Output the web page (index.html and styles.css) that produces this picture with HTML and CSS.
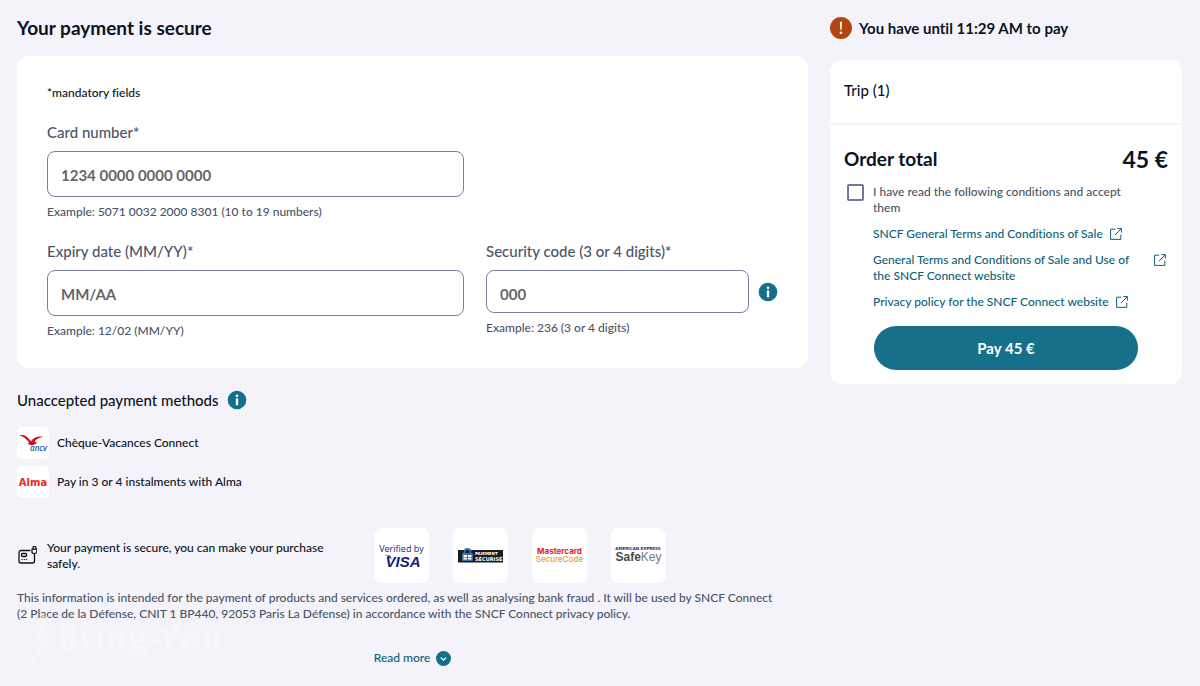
FILE: index.html
```html
<!DOCTYPE html>
<html lang="en">
<head>
<meta charset="utf-8">
<meta name="viewport" content="width=device-width, initial-scale=1">
<title>Your payment is secure</title>
<link rel="stylesheet" href="styles.css">
</head>
<body>
<svg class="defs" aria-hidden="true">
  <symbol id="info" viewBox="0 0 20 20">
    <circle cx="10" cy="10" r="9.300" fill="#12708a"/>
    <circle cx="10" cy="5.800" r="1.300" fill="#fff"/>
    <path d="M8.800 8.300h2.400v7H8.800z" fill="#fff"/>
  </symbol>
  <symbol id="external" viewBox="0 0 12 12">
    <path d="M5.2 1.2H.6v10.2h10.2V6.6M7.4.6h4v4M11.2.8L5 7" fill="none" stroke="currentColor" stroke-width="1"/>
  </symbol>
</svg>
<div class="page">
  <main class="main">
    <h1 class="title">Your payment is secure</h1>
    <form class="card form">
      <p class="mandatory">*mandatory fields</p>
      <div class="fields">
        <div class="field">
          <label class="label" for="card">Card number*</label>
          <input class="input" id="card" type="text" placeholder="1234 0000 0000 0000">
          <p class="hint">Example: 5071 0032 2000 8301 (10 to 19 numbers)</p>
        </div>
        <div class="field field-start">
          <label class="label" for="expiry">Expiry date (MM/YY)*</label>
          <input class="input" id="expiry" type="text" placeholder="MM/AA">
          <p class="hint">Example: 12/02 (MM/YY)</p>
        </div>
        <div class="field">
          <label class="label" for="code">Security code (3 or 4 digits)*</label>
          <div class="with-info">
            <input class="input input-short" id="code" type="text" placeholder="000">
            <button class="icon-button" type="button" aria-label="About the security code"><svg class="info"><use href="#info"/></svg></button>
          </div>
          <p class="hint">Example: 236 (3 or 4 digits)</p>
        </div>
      </div>
    </form>

    <section class="methods">
      <div class="methods-head">
        <h2 class="subtitle">Unaccepted payment methods</h2>
        <button class="icon-button" type="button" aria-label="About payment methods"><svg class="info"><use href="#info"/></svg></button>
      </div>
      <ul class="method-list">
        <li class="method">
          <svg class="tile" viewBox="0 0 32 32" aria-hidden="true">
            <path d="M2 8.500C6 7 10 8.500 14 14.200C16.500 11 20 9 26 9.800C21.500 10.800 18.800 12.500 17.700 14.600L20 16L17 17.800C14 19 12 17.500 10.500 16.500L12.400 15.800C9 11.500 6 9 2 8.500Z" fill="#d0101c"/>
            <text class="logo-ancv" x="13" y="24">ancv</text>
          </svg>
          Chèque-Vacances Connect
        </li>
        <li class="method">
          <svg class="tile" viewBox="0 0 32 32" aria-hidden="true">
            <text class="logo-alma" x="16" y="20">Alma</text>
          </svg>
          Pay in 3 or 4 instalments with Alma
        </li>
      </ul>
    </section>

    <section class="safety">
      <div class="safety-note">
        <svg class="safe-icon" viewBox="0 0 20 20" fill="none" stroke="#111" stroke-width="1.300" aria-hidden="true">
          <path d="M13.500 4.500H4a2 2 0 0 0-2 2v8.500a2 2 0 0 0 2 2h11.500a2 2 0 0 0 2-2V8"/>
          <rect x="4.500" y="7.500" width="5" height="3" rx="1"/>
          <path d="M4.500 13.500h1.200M6.700 13.500h1.200M8.900 13.500h1.200" stroke-width="1"/>
          <path d="M15 3.200h4.800v3.500q-2.400 1.600-4.800 0zM16 3V1.600a1.400 1.400 0 0 1 2.800 0V3" stroke-width="1.200"/>
        </svg>
        <p class="safety-text">Your payment is secure, you can make your purchase safely.</p>
      </div>
      <div class="badges">
        <svg class="badge" viewBox="0 0 55 55" role="img" aria-label="Verified by Visa">
          <text class="logo-verified" x="27.500" y="24">Verified by</text>
          <text class="logo-visa" x="29" y="39">VISA</text>
          <path d="M11 27.500h5l2 4q-3-3-7-4z" fill="#171d78"/>
        </svg>
        <svg class="badge" viewBox="0 0 55 55" role="img" aria-label="Paiement sécurisé">
          <rect x="5" y="22" width="45" height="12.500" fill="#1a1c1e"/>
          <path d="M11.500 26v-2a3 3 0 0 1 6 0v2" fill="none" stroke="#3573a3" stroke-width="1.800"/>
          <rect x="9" y="25" width="11" height="8" rx="1" fill="#3573a3"/>
          <path d="M10.500 27h3.500v2h-3.500zM15 27h3.500v2H15zM10.500 29.800h3.500v1.700h-3.500zM15 29.800h3.500v1.700H15z" fill="#fff"/>
          <text class="logo-paiement" x="22" y="27">PAIEMENT</text>
          <text class="logo-securise" x="22" y="32.500">SÉCURISÉ</text>
        </svg>
        <svg class="badge" viewBox="0 0 55 55" role="img" aria-label="Mastercard SecureCode">
          <text class="logo-mastercard" x="27.500" y="25.500">Mastercard</text>
          <text class="logo-securecode" x="27.500" y="34">SecureCode</text>
        </svg>
        <svg class="badge" viewBox="0 0 55 55" role="img" aria-label="American Express SafeKey">
          <text class="logo-amex" x="27" y="22">AMERICAN EXPRESS</text>
          <text class="logo-safekey" x="27.500" y="32.500"><tspan class="safe">Safe</tspan>Key</text>
        </svg>
      </div>
    </section>

    <p class="legal">This information is intended for the payment of products and services ordered, as well as analysing bank fraud . It will be used by SNCF Connect (2&nbsp;Place de la Défense, CNIT 1 BP440, 92053 Paris La Défense) in accordance with the SNCF Connect privacy policy.</p>
    <button class="read-more" type="button">Read more
      <svg class="chevron" viewBox="0 0 15 15" aria-hidden="true"><circle cx="7.500" cy="7.500" r="7.500" fill="#12708a"/><path d="M4.800 6.500l2.700 2.600 2.700-2.600" fill="none" stroke="#fff" stroke-width="1.200"/></svg>
    </button>
    <div class="watermark">
      <svg class="runner" viewBox="0 0 30 56" aria-hidden="true"><path d="M0 5L9 11L13 10Q12 4 16 3Q20 4 18 9L23 3L20 12L18 18L20 26L20 36Q18 41 12 43L7 52L4 54L8 42L13 36L11 28L13 19L11 14Q4 11 0 5Z" fill="#fff"/></svg>
      <span class="brand">Bring-You</span>
    </div>
  </main>

  <aside class="aside">
    <p class="deadline">
      <svg class="alert" viewBox="0 0 22 22" aria-hidden="true"><circle cx="11" cy="11" r="11" fill="#b34513"/><path d="M9.900 4.800h2.200l-.4 8h-1.400z" fill="#fff"/><circle cx="11" cy="15.800" r="1.300" fill="#fff"/></svg>
      You have until 11:29 AM to pay
    </p>
    <div class="card">
      <p class="trip">Trip (1)</p>
      <div class="order">
        <div class="total">
          <h2 class="total-label">Order total</h2>
          <span class="amount">45 €</span>
        </div>
        <div class="conditions">
          <input class="check" id="accept" type="checkbox">
          <label class="accept" for="accept">I have read the following conditions and accept them</label>
        </div>
        <ul class="links">
          <li><a class="link" href="#sale"><span>SNCF General Terms and Conditions of Sale</span><svg class="external"><use href="#external"/></svg></a></li>
          <li><a class="link link-wide" href="#use"><span>General Terms and Conditions of Sale and Use of the SNCF Connect website</span><svg class="external"><use href="#external"/></svg></a></li>
          <li><a class="link" href="#privacy"><span>Privacy policy for the SNCF Connect website</span><svg class="external"><use href="#external"/></svg></a></li>
        </ul>
        <button class="pay" type="button">Pay 45 €</button>
      </div>
    </div>
  </aside>
</div>
</body>
</html>
```
FILE: styles.css
```css
* { box-sizing: border-box; margin: 0; }
body {
  background: #f3f3f9;
  color: #0c131f;
  font-family: Lato, "Noto Sans", sans-serif;
  font-size: 12px;
  font-weight: 500;
  font-variant-ligatures: none;
  line-height: 16px;
}
ul { list-style: none; padding: 0; }
button, input { font: inherit; color: inherit; }
button { border: 0; padding: 0; background: none; cursor: pointer; }
svg { display: block; flex: none; }
.defs { position: absolute; width: 0; height: 0; }

.page {
  display: grid;
  grid-template-columns: minmax(0, 1fr) 352px;
  gap: 22px;
  align-items: start;
  padding: 16px 18px 12px 17px;
}
.card { background: #fff; border-radius: 12px; }
.main { position: relative; }
.title { font-size: 19px; font-weight: 700; line-height: 24px; margin-bottom: 16px; }

.form { padding: 29px 30px; }
.mandatory { margin-bottom: 21px; }
.fields { display: grid; grid-template-columns: 10fr 7fr; column-gap: 22px; row-gap: 21px; }
.field-start { grid-column: 1; }
.label { display: block; color: #4a5568; font-size: 15px; line-height: 20px; margin-bottom: 9px; }
.input {
  display: block;
  width: 100%;
  height: 46px;
  padding: 2px 13px 0;
  border: 1px solid #7a819c;
  border-radius: 8px;
  background: #fff;
  font-size: 15px;
}
.input-short { height: 43px; padding-top: 4px; }
.input::placeholder { color: #666; font-weight: 700; opacity: 1; }
.hint { color: #4a5568; margin-top: 7px; }
.with-info { display: flex; align-items: center; gap: 9px; }
.info { width: 20px; height: 20px; }

.methods { margin-top: 22px; }
.methods-head { display: flex; align-items: center; gap: 8px; }
.subtitle { font-size: 15px; font-weight: 500; line-height: 20px; }
.method-list { display: grid; gap: 7px; margin-top: 17px; }
.method { display: flex; align-items: center; gap: 8px; }
.tile { width: 32px; height: 32px; border-radius: 5px; background: #fff; }

.safety { display: flex; align-items: center; gap: 42px; margin-top: 30px; }
.safety-note { display: flex; align-items: center; gap: 10px; flex: 0 1 315px; }
.safe-icon { width: 20px; height: 20px; }
.badges { display: flex; gap: 24px; }
.badge { width: 55px; height: 55px; border-radius: 7px; background: #fff; }
.legal { color: #4a5568; margin-top: 7px; }
.read-more { display: flex; align-items: center; gap: 6px; margin: 28px auto 0; color: #0c627b; }
.chevron { width: 15px; height: 15px; }

.watermark {
  position: absolute;
  left: 10px;
  bottom: 0;
  display: flex;
  align-items: center;
  opacity: 0.4;
  pointer-events: none;
}
.runner { width: 30px; height: 56px; }
.brand { color: #fff; font-family: "Open Sans", sans-serif; font-size: 33px; font-weight: 800; line-height: 40px; }

.deadline { display: flex; align-items: center; gap: 7px; font-size: 15px; font-weight: 700; line-height: 24px; margin-bottom: 20px; }
.alert { width: 22px; height: 22px; }
.trip { padding: 20px 14px 23px; font-size: 15px; line-height: 20px; border-bottom: 2px solid #f3f3f9; }
.order { padding: 18px 14px 14px; }
.total { display: flex; align-items: center; justify-content: space-between; }
.total-label { font-size: 19px; font-weight: 700; line-height: 28px; }
.amount { font-size: 23px; font-weight: 700; line-height: 32px; }
.conditions { display: flex; align-items: flex-start; gap: 9px; margin-top: 9px; padding-right: 30px; }
.check {
  appearance: none;
  flex: none;
  width: 17px;
  height: 17px;
  margin: 0 0 0 3px;
  border: 2px solid #717892;
  border-radius: 2px;
  background: #fff;
}
.accept { color: #4a5568; }
.links { display: grid; gap: 10px; margin: 10px 0 0 29px; }
.link { display: flex; align-items: flex-start; gap: 7px; color: #0c627b; text-decoration: none; }
.link-wide { justify-content: space-between; gap: 12px; padding-right: 2px; }
.external { width: 12px; height: 12px; margin-top: 2px; }
.pay {
  display: block;
  width: calc(100% - 60px);
  height: 44px;
  margin: 16px 30px 0;
  border-radius: 22px;
  background: #16708a;
  color: #fff;
  font-size: 15px;
  font-weight: 700;
}

.logo-ancv { font: italic 600 8px "Open Sans", sans-serif; fill: #27569c; }
.logo-alma { font: 700 10px "DejaVu Sans", sans-serif; fill: #f02a12; text-anchor: middle; }
.logo-verified { font: 500 9px "Open Sans", sans-serif; fill: #171d78; text-anchor: middle; }
.logo-visa { font: italic 800 15px "Liberation Sans", sans-serif; fill: #171d78; text-anchor: middle; }
.logo-paiement { font: 700 4px "DejaVu Sans", sans-serif; fill: #fff; }
.logo-securise { font: 700 5px "DejaVu Sans", sans-serif; fill: #fff; }
.logo-mastercard { font: 700 8px Inter, sans-serif; fill: #e11a30; text-anchor: middle; }
.logo-securecode { font: 500 8px Inter, sans-serif; fill: #f29a1f; text-anchor: middle; }
.logo-amex { font: 700 4px "DejaVu Sans", sans-serif; fill: #142b68; text-anchor: middle; }
.logo-safekey { font: 400 12px "Liberation Sans", sans-serif; fill: #777; text-anchor: middle; }
.safe { font-weight: 700; fill: #4a4a4a; }
```
